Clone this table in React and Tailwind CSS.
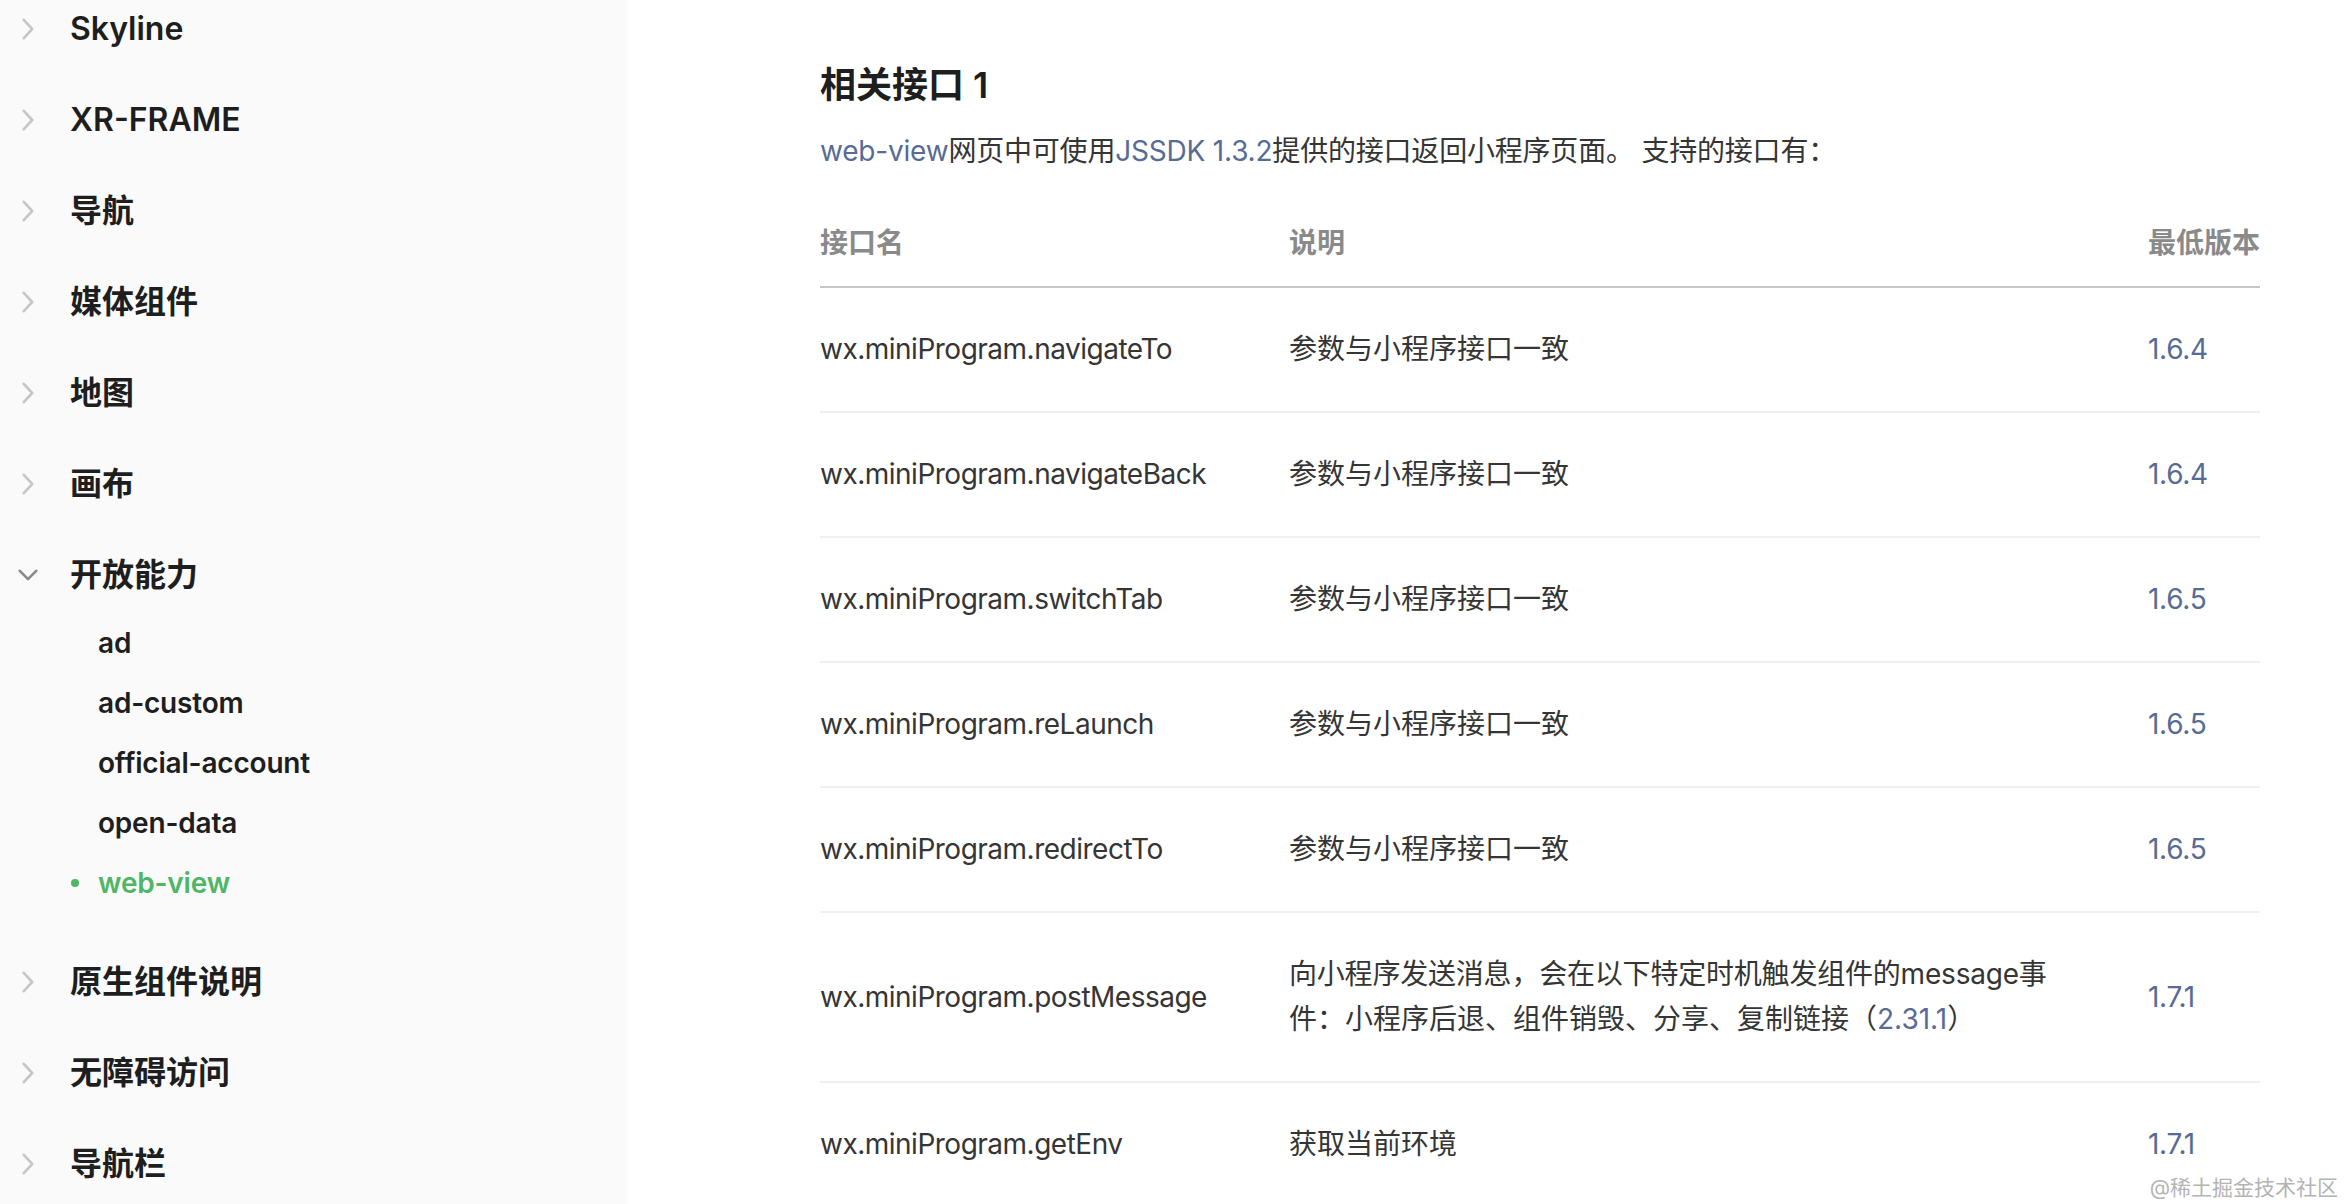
import React from "react";

const topBefore = ["Skyline", "XR-FRAME", "导航", "媒体组件", "地图", "画布"];
const subItems = ["ad", "ad-custom", "official-account", "open-data", "web-view"];
const topAfter = ["原生组件说明", "无障碍访问", "导航栏"];

const rows = [
  { name: "wx.miniProgram.navigateTo", desc: ["参数与小程序接口一致"], ver: "1.6.4" },
  { name: "wx.miniProgram.navigateBack", desc: ["参数与小程序接口一致"], ver: "1.6.4" },
  { name: "wx.miniProgram.switchTab", desc: ["参数与小程序接口一致"], ver: "1.6.5" },
  { name: "wx.miniProgram.reLaunch", desc: ["参数与小程序接口一致"], ver: "1.6.5" },
  { name: "wx.miniProgram.redirectTo", desc: ["参数与小程序接口一致"], ver: "1.6.5" },
  { name: "wx.miniProgram.postMessage", desc: null, ver: "1.7.1" },
  { name: "wx.miniProgram.getEnv", desc: ["获取当前环境"], ver: "1.7.1" },
];

function ChevronRight() {
  return (
    <svg width="12" height="22" viewBox="0 0 12 22" fill="none">
      <path d="M1.8 1.8 L10.2 11 L1.8 20.2" stroke="#c6c6c6" strokeWidth="2.6" strokeLinecap="round" strokeLinejoin="round" />
    </svg>
  );
}

function ChevronDown() {
  return (
    <svg width="20" height="12" viewBox="0 0 20 12" fill="none">
      <path d="M1.8 1.8 L10 10.2 L18.2 1.8" stroke="#8a8a8a" strokeWidth="2.6" strokeLinecap="round" strokeLinejoin="round" />
    </svg>
  );
}

function TopItem({ label, open }) {
  return (
    <li className="h-[91px] flex items-center">
      <div className={open ? "w-[70px] pl-[18px]" : "w-[70px] pl-[22px]"}>
        {open ? <ChevronDown /> : <ChevronRight />}
      </div>
      <span className="text-[32px] font-semibold text-[#1e1e1e] leading-none">{label}</span>
    </li>
  );
}

export default function App() {
  return (
    <div className="flex h-[1204px] w-[2344px] overflow-hidden bg-white font-['Inter','Noto_Sans_CJK_SC',sans-serif]">
      {/* 侧边栏 */}
      <aside className="w-[627px] shrink-0 bg-[#fafafa] overflow-hidden">
        <ul className="-mt-[17px]">
          {topBefore.map((t) => (
            <TopItem key={t} label={t} />
          ))}
          <TopItem label="开放能力" open />
          <li>
            <ul className="-mt-[7px] mb-[23px]">
              {subItems.map((s) =>
                s === "web-view" ? (
                  <li key={s} className="h-[60px] flex items-center pl-[71px]">
                    <span className="w-[8px] h-[8px] rounded-full bg-[#4fb666] mr-[19px]" />
                    <span className="text-[28px] font-semibold text-[#4fb666] leading-none tracking-[-0.2px]">{s}</span>
                  </li>
                ) : (
                  <li key={s} className="h-[60px] flex items-center pl-[98px]">
                    <span className="text-[28px] font-semibold text-[#1e1e1e] leading-none tracking-[-0.2px]">{s}</span>
                  </li>
                )
              )}
            </ul>
          </li>
          {topAfter.map((t) => (
            <TopItem key={t} label={t} />
          ))}
        </ul>
      </aside>

      {/* 正文 */}
      <main className="flex-1 pl-[193px] pt-[60px] relative text-[#353535]">
        <h2 className="text-[36px] leading-[50px] font-semibold text-[#1e1e1e]">相关接口 1</h2>
        <p className="mt-[19px] text-[28px] leading-[45px] tracking-[-0.2px]">
          <span className="text-[#576b95]">web-view</span>网页中可使用<span className="text-[#576b95]">JSSDK 1.3.2</span>提供的接口返回小程序页面。 支持的接口有：
        </p>

        <table className="mt-[19px] w-[1440px] table-fixed border-collapse text-left text-[28px] leading-[45px]">
          <colgroup>
            <col className="w-[469px]" />
            <col className="w-[859px]" />
            <col className="w-[112px]" />
          </colgroup>
          <thead>
            <tr className="border-b-2 border-[#c6c6c6]">
              <th className="pt-[28px] pb-[20px] font-semibold text-[#8a8a8a]">接口名</th>
              <th className="pt-[28px] pb-[20px] font-semibold text-[#8a8a8a]">说明</th>
              <th className="pt-[28px] pb-[20px] font-semibold text-[#8a8a8a] whitespace-nowrap">最低版本</th>
            </tr>
          </thead>
          <tbody>
            {rows.map((r) => (
              <tr key={r.name} className="border-b-2 border-[#f0f0f0]">
                <td className="py-[39px] whitespace-nowrap tracking-[-0.5px]">{r.name}</td>
                <td className="py-[39px]">
                  {r.desc ? (
                    r.desc[0]
                  ) : (
                    <>
                      <span className="block whitespace-nowrap tracking-[-0.2px]">向小程序发送消息，会在以下特定时机触发组件的message事</span>
                      <span className="block whitespace-nowrap">
                        件：小程序后退、组件销毁、分享、复制链接（<span className="text-[#576b95]">2.31.1</span>）
                      </span>
                    </>
                  )}
                </td>
                <td className="py-[39px] text-[#576b95] tracking-[-0.3px]">{r.ver}</td>
              </tr>
            ))}
          </tbody>
        </table>

        <div className="absolute right-[6px] bottom-[6px] text-[21px] leading-none text-[#b4b4b4] [text-shadow:0_0_2px_#fff]">
          @稀土掘金技术社区
        </div>
      </main>
    </div>
  );
}
